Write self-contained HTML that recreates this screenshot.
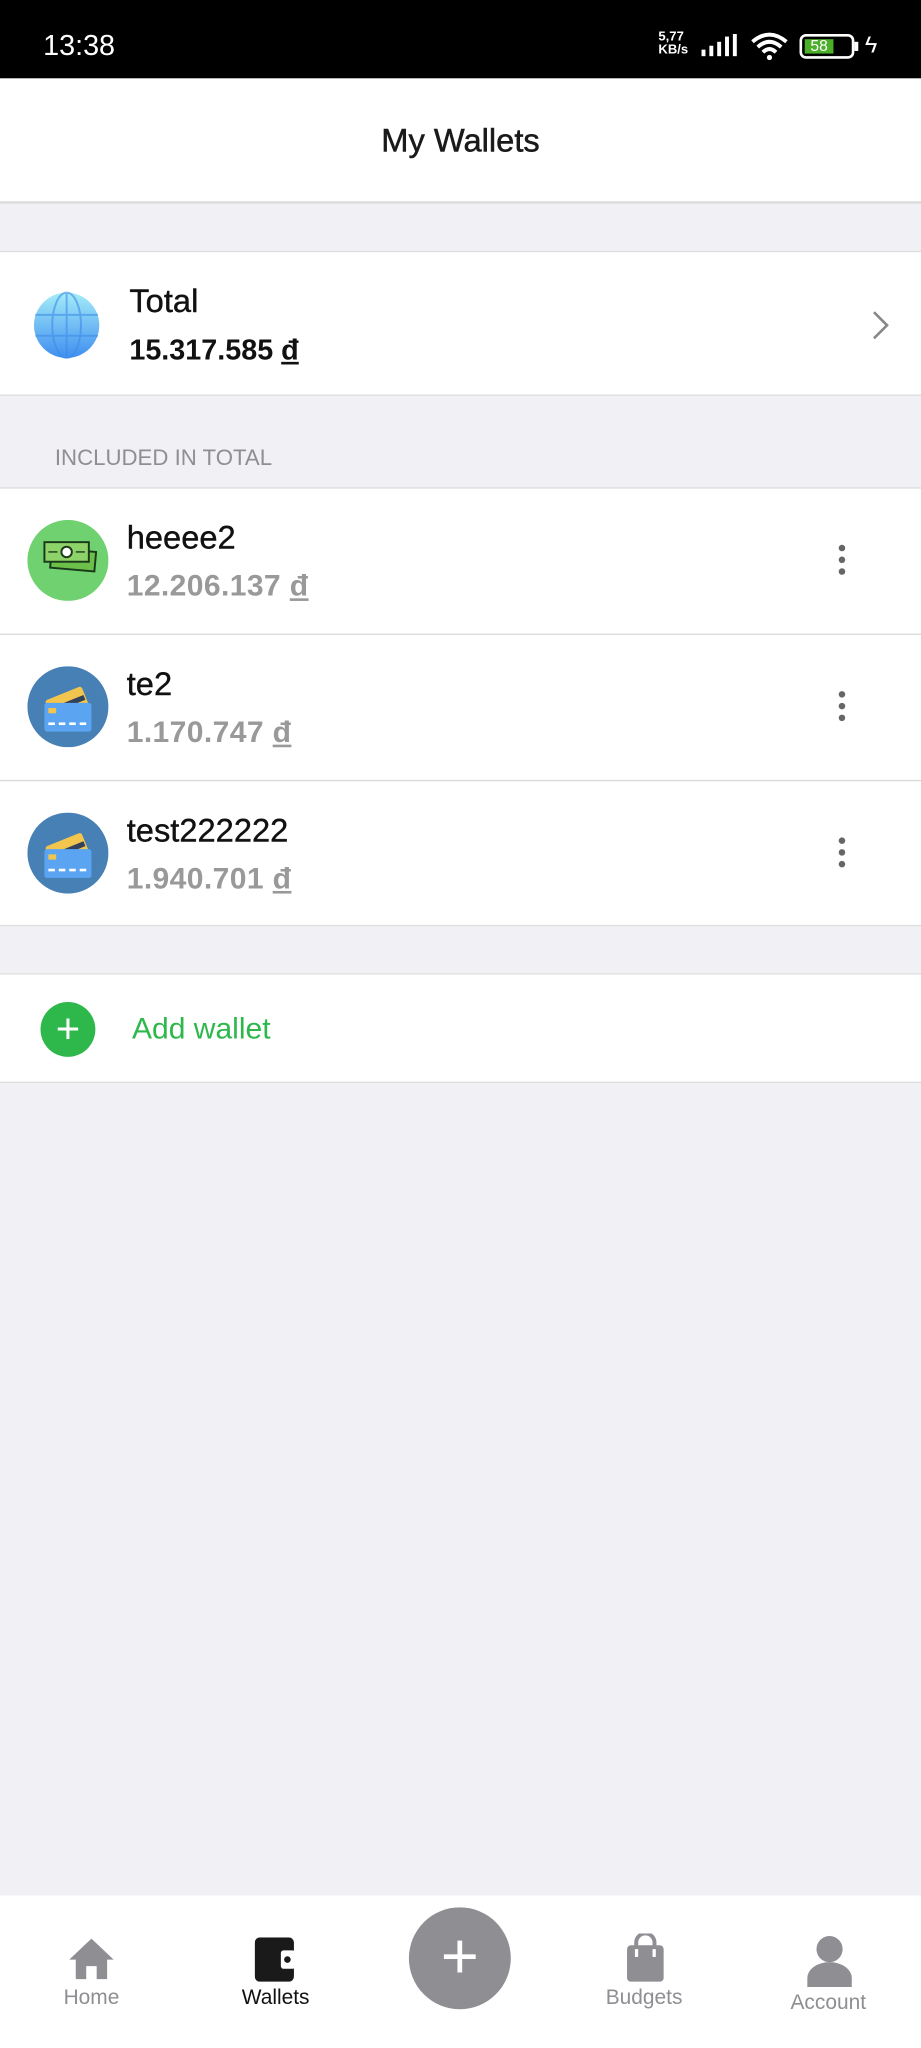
<!DOCTYPE html>
<html><head><meta charset="utf-8"><style>
*{margin:0;padding:0;box-sizing:border-box}
html,body{width:921px;height:2048px;overflow:hidden;background:#f1f1f5;font-family:"Liberation Sans",Roboto,sans-serif}
#w{position:absolute;left:0;top:0;width:705px;height:1568px;transform:scale(1.30638);transform-origin:0 0;background:#f1f1f5}
.a{position:absolute}
.sb{left:0;top:0;width:705px;height:60px;background:#000;color:#fff}
.hd{left:0;top:60px;width:705px;height:96px;background:#fff;border-bottom:2px solid #dcdcdc;text-align:center;font-size:25px;line-height:96px;color:#1a1a1a;-webkit-text-stroke:.4px #1a1a1a}
.row{left:0;width:705px;background:#fff}
.name{font-size:25px;color:#111;-webkit-text-stroke:.3px #111}
.amt{font-size:23px;color:#999;font-weight:bold;letter-spacing:.3px}
.dots{right:58px;width:5px}
.dots i{display:block;width:5px;height:5px;border-radius:50%;background:#666;margin-bottom:4px}
.hr{left:0;width:705px;height:1px;background:#d8d8d8}
.nav{left:0;top:1451px;width:705px;height:117px;background:#fff}
.nl{font-size:16px;color:#8e8e93;text-align:center;width:100px}
</style></head><body><div id="w">
<div class="a sb"><div class="a" style="left:33px;top:22px;font-size:22px">13:38</div>
<div class="a" style="left:504px;top:24px;font-size:10px;line-height:10px;font-weight:bold">5,77<br>KB/s</div>
<svg class="a" style="left:536px;top:26px" width="30" height="20"><rect x="1" y="12" width="3" height="5" fill="#fff"/><rect x="7" y="9" width="3" height="8" fill="#fff"/><rect x="13" y="6" width="3" height="11" fill="#fff"/><rect x="19" y="2" width="3" height="15" fill="#fff"/><rect x="25" y="0" width="3" height="17" fill="#fff"/></svg>
<svg class="a" style="left:574px;top:24px" width="30" height="22"><path d="M2 8 Q15 -3 28 8" stroke="#fff" stroke-width="3" fill="none"/><path d="M6 12 Q15 4 24 12" stroke="#fff" stroke-width="3" fill="none"/><path d="M10 16 Q15 11 20 16" stroke="#fff" stroke-width="3" fill="none"/><circle cx="15" cy="20" r="2" fill="#fff"/></svg>
<div class="a" style="left:612px;top:26px;width:42px;height:19px;border:2px solid #fff;border-radius:5px"><div style="margin:2px;width:22px;height:11px;background:#4caf2a;font-size:12px;line-height:11px;text-align:center">58</div></div>
<div class="a" style="left:654px;top:32px;width:3px;height:7px;background:#fff"></div>
<div class="a" style="left:662px;top:24px;font-size:18px">ϟ</div>
</div>
<div class="a hd">My Wallets</div>
<div class="a row" style="top:192px;height:111px;border-top:1px solid #ddd;border-bottom:1px solid #ddd">
<svg class="a" style="left:25px;top:30px" width="52" height="52"><defs><linearGradient id="g" x1="0" y1="0" x2="0" y2="1"><stop offset="0" stop-color="#a5ecf8"/><stop offset="1" stop-color="#3e8ef0"/></linearGradient></defs><circle cx="26" cy="26" r="25" fill="url(#g)"/><g stroke="#3c8ce8" stroke-width="1.5" fill="none" opacity=".6"><ellipse cx="26" cy="26" rx="11" ry="25"/><line x1="26" y1="1" x2="26" y2="51"/><line x1="2" y1="18" x2="50" y2="18"/><line x1="2" y1="34" x2="50" y2="34"/></g></svg>
<div class="a name" style="left:99px;top:24px">Total</div>
<div class="a" style="left:99px;top:62px;font-size:22px;font-weight:bold;color:#111">15.317.585 <u>đ</u></div>
<svg class="a" style="left:667px;top:44px" width="14" height="24"><path d="M2 2 L12 12 L2 22" stroke="#888" stroke-width="2" fill="none"/></svg>
</div>
<div class="a" style="left:42px;top:341px;font-size:17px;color:#8e8e93">INCLUDED IN TOTAL</div>
<div class="a row" style="top:373px;height:336px;border-top:1px solid #ddd;border-bottom:1px solid #ddd"></div>
<div class="a hr" style="top:485px"></div><div class="a hr" style="top:597px"></div>

<svg class="a" style="left:21px;top:398px" width="62" height="62"><circle cx="31" cy="31" r="31" fill="#6fd16f"/><rect x="18" y="23" width="34" height="15" fill="#6cc04a" stroke="#1a3a1a" stroke-width="1.5" transform="rotate(5 35 30)"/><rect x="13" y="17" width="34" height="15" fill="#8ed36a" stroke="#1a3a1a" stroke-width="1.5"/><circle cx="30" cy="24.5" r="4" fill="#fff" stroke="#1a3a1a" stroke-width="1.5"/><line x1="16" y1="24.5" x2="23" y2="24.5" stroke="#1a3a1a"/><line x1="37" y1="24.5" x2="44" y2="24.5" stroke="#1a3a1a"/></svg>
<div class="a name" style="left:97px;top:398px">heeee2</div>
<div class="a amt" style="left:97px;top:435px">12.206.137 <u>đ</u></div>
<div class="a dots" style="top:417px"><i></i><i></i><i></i></div>

<svg class="a" style="left:21px;top:510px" width="62" height="62"><circle cx="31" cy="31" r="31" fill="#4680b4"/><rect x="16" y="20" width="30" height="20" rx="2" fill="#f2c54e" transform="rotate(-22 31 30)"/><rect x="15" y="27" width="30" height="4" fill="#33425a" transform="rotate(-22 31 30)"/><rect x="13" y="28" width="36" height="22" rx="2" fill="#5aa4f2"/><rect x="16" y="32" width="6" height="4" fill="#f2c54e"/><g fill="#fff"><rect x="16" y="43" width="5" height="2"/><rect x="24" y="43" width="5" height="2"/><rect x="32" y="43" width="5" height="2"/><rect x="40" y="43" width="5" height="2"/></g></svg>
<div class="a name" style="left:97px;top:510px">te2</div>
<div class="a amt" style="left:97px;top:547px">1.170.747 <u>đ</u></div>
<div class="a dots" style="top:529px"><i></i><i></i><i></i></div>

<svg class="a" style="left:21px;top:622px" width="62" height="62"><circle cx="31" cy="31" r="31" fill="#4680b4"/><rect x="16" y="20" width="30" height="20" rx="2" fill="#f2c54e" transform="rotate(-22 31 30)"/><rect x="15" y="27" width="30" height="4" fill="#33425a" transform="rotate(-22 31 30)"/><rect x="13" y="28" width="36" height="22" rx="2" fill="#5aa4f2"/><rect x="16" y="32" width="6" height="4" fill="#f2c54e"/><g fill="#fff"><rect x="16" y="43" width="5" height="2"/><rect x="24" y="43" width="5" height="2"/><rect x="32" y="43" width="5" height="2"/><rect x="40" y="43" width="5" height="2"/></g></svg>
<div class="a name" style="left:97px;top:622px">test222222</div>
<div class="a amt" style="left:97px;top:659px">1.940.701 <u>đ</u></div>
<div class="a dots" style="top:641px"><i></i><i></i><i></i></div>

<div class="a row" style="top:745px;height:84px;border-top:1px solid #ddd;border-bottom:1px solid #ddd">
<div class="a" style="left:31px;top:21px;width:42px;height:42px;border-radius:50%;background:#2eb84b;color:#fff;font-size:32px;line-height:40px;text-align:center">+</div>
<div class="a" style="left:101px;top:28px;font-size:23px;color:#2eb84b">Add wallet</div></div>

<div class="a nav">
<svg class="a" style="left:53px;top:33px" width="34" height="32"><path d="M17 0 L34 16 L29 16 L29 31 L21 31 L21 21 L13 21 L13 31 L5 31 L5 16 L0 16Z" fill="#8e8e93"/></svg>
<div class="a nl" style="left:20px;top:70px">Home</div>
<svg class="a" style="left:195px;top:32px" width="34" height="34"><rect x="0" y="0" width="30" height="34" rx="4" fill="#1a1a1a"/><rect x="20" y="10" width="11" height="14" rx="2" fill="#fff"/><circle cx="25" cy="17" r="2.5" fill="#1a1a1a"/></svg>
<div class="a nl" style="left:161px;top:70px;color:#111">Wallets</div>
<div class="a" style="left:313px;top:9px;width:78px;height:78px;border-radius:50%;background:#8e8e93;color:#fff;font-size:50px;line-height:74px;text-align:center;font-weight:300">+</div>
<svg class="a" style="left:479px;top:29px" width="30" height="37"><path d="M8 12 V7 a7 7 0 0 1 14 0 V12" stroke="#8e8e93" stroke-width="3" fill="none"/><rect x="1" y="9" width="28" height="28" rx="3" fill="#8e8e93"/><rect x="7" y="12" width="2.5" height="6" fill="#fff"/><rect x="20.5" y="12" width="2.5" height="6" fill="#fff"/></svg>
<div class="a nl" style="left:443px;top:70px">Budgets</div>
<svg class="a" style="left:617px;top:30px" width="36" height="40"><circle cx="18" cy="11" r="10" fill="#8e8e93"/><path d="M1 40 V33 a17 12 0 0 1 34 0 V40Z" fill="#8e8e93"/></svg>
<div class="a nl" style="left:584px;top:74px">Account</div>
</div>
</div></body></html>
